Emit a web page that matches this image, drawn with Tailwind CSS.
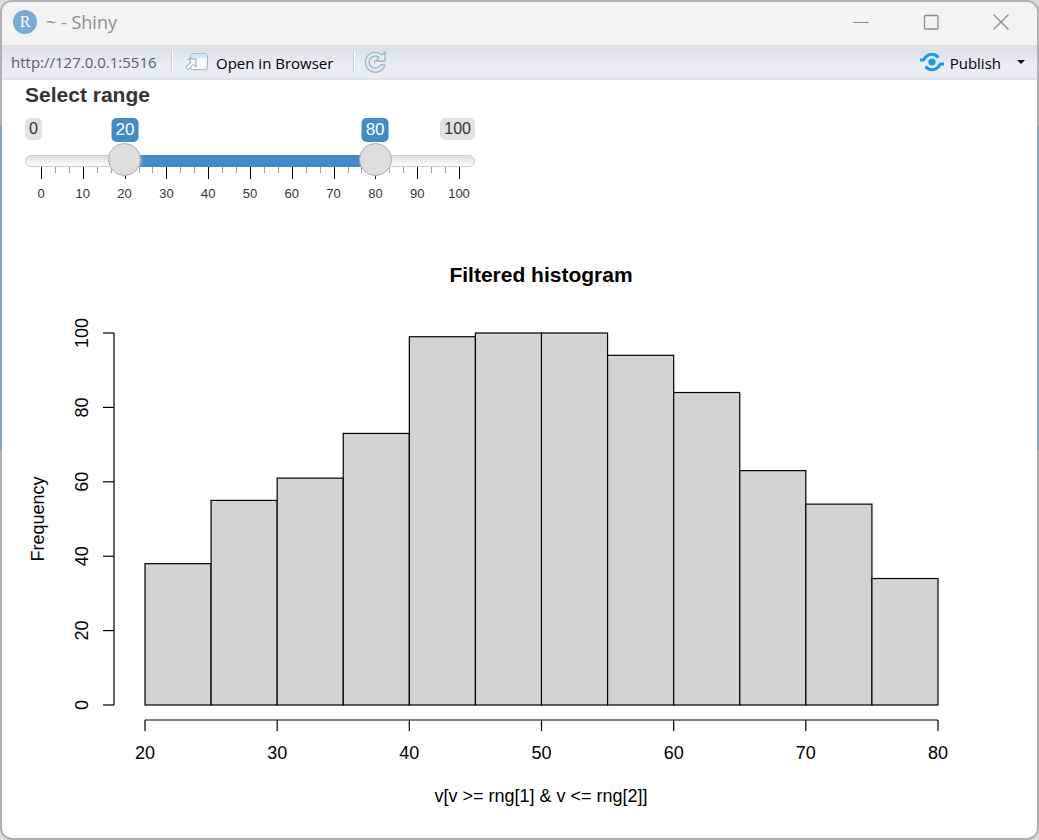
<!DOCTYPE html>
<html lang="en">
<head>
    <meta charset="UTF-8">
    <meta name="viewport" content="width=device-width, initial-scale=1.0">
    <title>~ - Shiny</title>
    <script src="https://cdn.jsdelivr.net/npm/@tailwindcss/browser@4"></script>
</head>
<body class="bg-[#dcdcdc] font-['Liberation_Sans',Arial,sans-serif]">
    <!-- Window frame -->
    <div class="min-h-screen flex flex-col p-[2px] rounded-xl bg-[linear-gradient(#b2b2b2_125px,#8fa2bb_125px,#8fa2bb_450px,#b0b0b0_450px)]">
    <div class="flex-1 flex flex-col bg-white rounded-[10px] overflow-hidden">

        <!-- Title bar -->
        <header class="h-[43px] shrink-0 flex items-start pl-[11px] pr-[1px] bg-[#f3f3f3] font-['Open_Sans','Noto_Sans',sans-serif]">
            <svg class="size-6 mt-2 mr-[9px]" viewBox="0 0 24 24" aria-hidden="true">
                <circle cx="12" cy="12" r="12" fill="#75aadb"/>
                <text x="12" y="17" text-anchor="middle" font-family="Liberation Serif, serif" font-size="16" fill="#fff">R</text>
            </svg>
            <h1 class="text-[18px] leading-10 text-[#8e8e8e]">~ - Shiny</h1>
            <div class="ml-auto flex text-[#8a8a8a]">
                <button type="button" aria-label="Minimize" class="w-[70px] h-10 flex items-center justify-center">
                    <svg class="size-4" viewBox="0 0 16 16" fill="none" stroke="currentColor"><path d="M0.500 8.500h15"/></svg>
                </button>
                <button type="button" aria-label="Maximize" class="w-[70px] h-10 flex items-center justify-center">
                    <svg class="size-4" viewBox="0 0 16 16" fill="none" stroke="currentColor" stroke-width="1.300"><rect x="1.500" y="1.500" width="13.500" height="13.500" rx="1"/></svg>
                </button>
                <button type="button" aria-label="Close" class="w-[70px] h-10 flex items-center justify-center">
                    <svg class="size-4" viewBox="0 0 16 16" fill="none" stroke="currentColor" stroke-width="1.200"><path d="M0.500 0.500l15 15M15.500 0.500l-15 15"/></svg>
                </button>
            </div>
        </header>

        <!-- Toolbar -->
        <nav class="h-[35px] shrink-0 flex items-center pl-[9px] pr-[12px] bg-linear-to-b from-[#dcdee3] to-[#eaecf0] to-60% border-b-2 border-[#dfe3e8] text-[15px] leading-5 text-black font-['Open_Sans','Noto_Sans',sans-serif]">
            <span class="w-[151px] text-[#5f5f5f]">http://127.0.0.1:5516</span>
            <span class="w-[2px] h-[22px] ml-[9px] mr-3 bg-[#c9ccd2] border-r border-white"></span>
            <button type="button" class="w-[152px] flex items-center gap-2">
                <svg class="w-[23px] h-[18px]" viewBox="0 0 23 18" aria-hidden="true">
                    <rect x="5.500" y="0.700" width="17" height="16" rx="2" fill="#f6f9fc" stroke="#a3b4c1"/>
                    <path d="M6 5V3q0-2 2-2h12q2 0 2 2v2z" fill="#c9eafa"/>
                    <path d="M3 6h8v8l-2.600-2.600-5.200 5.300-2.400-2.400 5.200-5.300z" fill="#f3f5f7" stroke="#94a1ac"/>
                </svg>
                <span class="pt-[3px]">Open in Browser</span>
            </button>
            <span class="w-[2px] h-[22px] ml-4 mr-2 bg-[#c9ccd2] border-r border-white"></span>
            <button type="button" aria-label="Reload">
                <svg class="size-6" viewBox="0 0 24 24" aria-hidden="true">
                    <path d="M22 2v9h-9.500l3.500-3.500a6 6 0 1 0 1.500 7.500h4.500a10 10 0 1 1-3-10.200z" fill="#deebf7" stroke="#a5b1bc" stroke-width="1.300" stroke-linejoin="round"/>
                    <path d="M11.500 13.500a1.500 1.500 0 0 1 1-2.500" fill="none" stroke="#a5b1bc"/>
                </svg>
            </button>
            <button type="button" class="ml-auto flex items-center gap-[6px]">
                <svg class="w-6 h-5" viewBox="0 0 24 20" fill="none" stroke="#119cec" stroke-width="3" aria-hidden="true">
                    <circle cx="12" cy="10" r="3.600" fill="#119cec" stroke="none"/>
                    <path d="M0 8h3.500C5.500 4.500 8 2.300 12 2.300c3 0 5 1.200 6.500 3.200"/>
                    <path d="M24 12h-3.500c-2 3.500-4.500 5.700-8.500 5.700-3 0-5-1.200-6.500-3.200"/>
                </svg>
                <span class="pt-[3px]">Publish</span>
            </button>
            <button type="button" aria-label="Publish options" class="ml-4">
                <svg class="w-2 h-1" viewBox="0 0 8 4"><path d="M0 0h8l-4 4z" fill="#111"/></svg>
            </button>
        </nav>

        <main class="flex-1 flex flex-col">
            <!-- Range slider -->
            <div role="group" aria-labelledby="rangeLabel" class="w-[450px] ml-[23px] pt-[3px] text-[#333]">
                <label id="rangeLabel" for="from" class="block text-[21px] leading-6 font-bold">Select range</label>
                <div class="relative mt-[11px] h-6 flex justify-between items-start text-[16px] leading-[22px]">
                    <span class="px-1 rounded-[5px] bg-[#e1e1e1]">0</span>
                    <span class="px-1 rounded-[5px] bg-[#e1e1e1]">100</span>
                    <output id="fromLabel" class="absolute top-0 -translate-x-1/2 px-1 rounded-[5px] bg-[#428bca] text-[17px] leading-6 text-white">20</output>
                    <output id="toLabel" class="absolute top-0 -translate-x-1/2 px-1 rounded-[5px] bg-[#428bca] text-[17px] leading-6 text-white">80</output>
                </div>
                <div class="relative mt-[13px] h-3">
                    <div class="h-full rounded-full border border-[#ccc] bg-linear-to-b from-[#dedede] to-white"></div>
                    <div id="bar" class="absolute inset-y-0 bg-[#428bca]"></div>
                    <div id="ticks" class="absolute top-full inset-x-[16px]"></div>
                    <input id="from" type="range" min="0" max="100" value="20"
                           class="absolute -top-3 left-0 w-full h-[33px] appearance-none bg-transparent pointer-events-none [&::-webkit-slider-thumb]:pointer-events-auto [&::-webkit-slider-thumb]:appearance-none [&::-webkit-slider-thumb]:size-[33px] [&::-webkit-slider-thumb]:rounded-full [&::-webkit-slider-thumb]:border [&::-webkit-slider-thumb]:border-[#ababab] [&::-webkit-slider-thumb]:bg-[#dedede] [&::-webkit-slider-thumb]:shadow-[1px_1px_3px_rgba(255,255,255,0.3)]">
                    <input id="to" type="range" min="0" max="100" value="80" aria-label="Range end"
                           class="absolute -top-3 left-0 w-full h-[33px] appearance-none bg-transparent pointer-events-none [&::-webkit-slider-thumb]:pointer-events-auto [&::-webkit-slider-thumb]:appearance-none [&::-webkit-slider-thumb]:size-[33px] [&::-webkit-slider-thumb]:rounded-full [&::-webkit-slider-thumb]:border [&::-webkit-slider-thumb]:border-[#ababab] [&::-webkit-slider-thumb]:bg-[#dedede] [&::-webkit-slider-thumb]:shadow-[1px_1px_3px_rgba(255,255,255,0.3)]">
                </div>
            </div>

            <!-- Histogram -->
            <svg id="plot" class="w-full mt-auto" viewBox="0 0 1035 598" font-family="Liberation Sans, Arial, sans-serif" font-size="18" role="img" aria-label="Filtered histogram"></svg>
        </main>
    </div>
    </div>

    <script>
        const from = document.getElementById('from');
        const to = document.getElementById('to');

        // Centre of a 33px thumb at the given value
        function place(value) {
            return `calc(33px / 2 + (100% - 33px) * ${value / 100})`;
        }

        function updateSlider() {
            const lo = Math.min(from.value, to.value);
            const hi = Math.max(from.value, to.value);
            const fromLabel = document.getElementById('fromLabel');
            const toLabel = document.getElementById('toLabel');
            fromLabel.textContent = lo;
            toLabel.textContent = hi;
            fromLabel.style.left = place(lo);
            toLabel.style.left = place(hi);
            const bar = document.getElementById('bar');
            bar.style.left = place(lo);
            bar.style.right = place(100 - hi);
        }

        // Three steps between labelled ticks
        let ticks = '';
        for (let i = 0; i <= 30; i++) {
            const left = `left:${i / 30 * 100}%`;
            if (i % 3 === 0) {
                ticks += `<span class="absolute top-0 w-px h-3 bg-black" style="${left}"></span>
                    <span class="absolute top-[19px] -translate-x-1/2 text-[13px] leading-4" style="${left}">${i / 3 * 10}</span>`;
            } else {
                ticks += `<span class="absolute top-0 w-px h-[6px] bg-[#999]" style="${left}"></span>`;
            }
        }
        document.getElementById('ticks').innerHTML = ticks;

        const counts = [38, 55, 61, 73, 99, 100, 100, 94, 84, 63, 54, 34];
        const px = v => 143 + (v - 20) * 793 / 60;
        const py = v => 465 - v * 3.72;

        let svg = '<text x="539" y="42" text-anchor="middle" font-size="21" font-weight="bold">Filtered histogram</text>';
        svg += '<g fill="#d3d3d3" stroke="#000" stroke-width="1.2">';
        counts.forEach((n, i) => {
            svg += `<rect x="${px(20 + i * 5)}" y="${py(n)}" width="${793 / 12}" height="${n * 3.72}"/>`;
        });
        svg += '</g><g fill="none" stroke="#000" stroke-width="1.2">';
        svg += `<path d="M${px(20)} 480H${px(80)}M112 ${py(0)}V${py(100)}"/>`;
        for (let v = 20; v <= 80; v += 10) svg += `<path d="M${px(v)} 480v11"/>`;
        for (let v = 0; v <= 100; v += 20) svg += `<path d="M112 ${py(v)}h-11"/>`;
        svg += '</g>';
        for (let v = 20; v <= 80; v += 10) svg += `<text x="${px(v)}" y="519" text-anchor="middle">${v}</text>`;
        for (let v = 0; v <= 100; v += 20) svg += `<text transform="translate(86 ${py(v)}) rotate(-90)" text-anchor="middle">${v}</text>`;
        svg += '<text transform="translate(42 279) rotate(-90)" text-anchor="middle">Frequency</text>';
        svg += '<text x="539" y="562" text-anchor="middle">v[v &gt;= rng[1] &amp; v &lt;= rng[2]]</text>';
        document.getElementById('plot').innerHTML = svg;

        from.addEventListener('input', updateSlider);
        to.addEventListener('input', updateSlider);
        updateSlider();
    </script>
</body>
</html>
